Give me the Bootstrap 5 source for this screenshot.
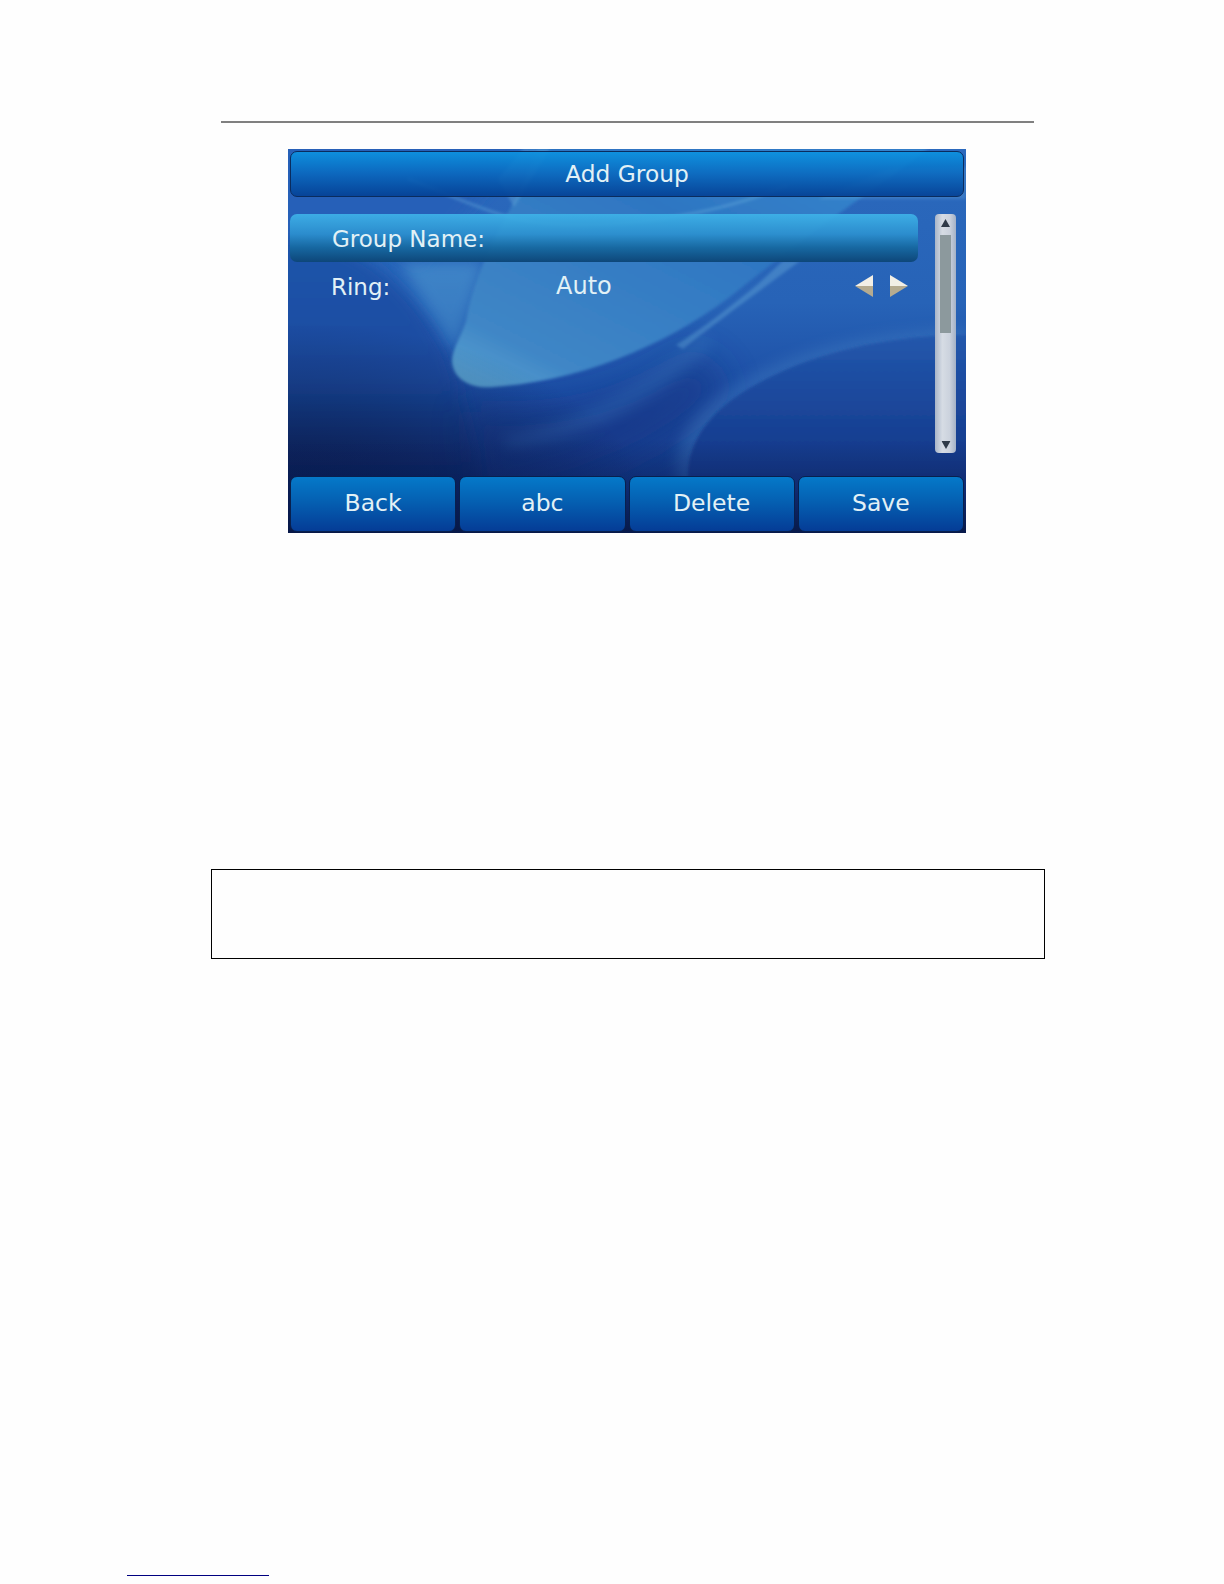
<!DOCTYPE html>
<html lang="en">
<head>
<meta charset="utf-8">
<title>Add Group</title>
<link href="https://cdn.jsdelivr.net/npm/bootstrap@5.3.0/dist/css/bootstrap.min.css" rel="stylesheet">
<style>
html,body{background:#fefefe;margin:0}
.doc-page{height:1584px;overflow:hidden}
.head-rule{height:2px;background:#808080;margin:121px 190px 0 221px}
.phone-screen{position:relative;width:678px;height:384px;margin:26px 0 0 288px;padding:2px;overflow:hidden;background:#1c4fa6;font-family:"DejaVu Sans",sans-serif;color:#e2f1f6}
.phone-bg{position:absolute;left:0;top:0;width:100%;height:100%}
.scr-layer{position:relative}
.title-bar{height:46px;font-size:23.300px;border:1px solid #0a2c5e;border-radius:7px;background:linear-gradient(180deg,rgba(12,146,224,.93),rgba(8,104,190,.86) 50%,rgba(5,66,150,.95))}
.title-bar span{position:relative;top:0}
.scr-mid{margin-top:17px}
.item-list{width:628px}
.item-row{height:48px;font-size:23px;padding-left:41px;border-radius:7px}
.item-sel{background:linear-gradient(180deg,rgba(62,178,232,.93),rgba(44,146,208,.88) 42%,rgba(22,104,160,.95) 70%,rgba(13,70,120,.98))}
.item-label{width:225px;flex:none}
.sel-text{position:relative;top:1px;left:1px}
.ring-label{position:relative;top:1px}
.ring-value{font-size:24px;position:relative}
.arrow-pair{margin-left:auto;margin-right:10px;gap:17px;display:flex}
.scroll-rail{width:21px;height:239px;margin-left:17px;border-radius:4px;background:linear-gradient(90deg,#a9b5c8,#d6dce4 35%,#cbd2dd 70%,#a4b1c6);position:relative}
.scroll-cap{height:17px}
.scroll-thumb{width:11px;height:98px;margin:4px auto 0;background:#8c999d}
.soft-row{margin:23px 0 0;gap:3px}
.soft-key{flex:1 1 0;height:56px;padding:0;font-family:"DejaVu Sans",sans-serif;font-size:23.500px;color:#e2f1f6;border:1px solid #08204e;border-radius:7px;background:linear-gradient(180deg,#0579c9,#0560b2 45%,#053c96)}
.soft-key:hover,.soft-key:active{color:#e2f1f6;background:linear-gradient(180deg,#0579c9,#0560b2 45%,#053c96);border-color:#08204e}
.note-box{height:90px;width:834px;margin:336px 0 0 211px;border:1px solid #000}
.foot-rule{height:1px;width:142px;background:#000080;margin:616px 0 0 127px}
</style>
</head>
<body>
<div class="doc-page">
  <div class="head-rule"></div>
  <div class="phone-screen">
    <svg class="phone-bg" viewBox="0 0 678 384" preserveAspectRatio="none" aria-hidden="true">
      <defs>
        <linearGradient id="baseG" x1="0" y1="0" x2="0" y2="1">
          <stop offset="0" stop-color="#2b69bd"/>
          <stop offset=".4" stop-color="#2763b7"/>
          <stop offset=".65" stop-color="#1c4ca3"/>
          <stop offset="1" stop-color="#0f2f78"/>
        </linearGradient>
        <linearGradient id="leftG" x1="0" y1="0" x2="0" y2="1">
          <stop offset="0" stop-color="#1f55ab"/>
          <stop offset=".5" stop-color="#1a4a9f"/>
          <stop offset=".8" stop-color="#0f2c74"/>
          <stop offset="1" stop-color="#091c52"/>
        </linearGradient>
        <linearGradient id="swathG" x1="0" y1="1" x2="1" y2="0">
          <stop offset="0" stop-color="#5da6d2"/>
          <stop offset=".16" stop-color="#3f86c6"/>
          <stop offset=".6" stop-color="#2e76c2"/>
          <stop offset="1" stop-color="#3689d0"/>
        </linearGradient>
        <linearGradient id="wedgeG" x1="0" y1="0" x2="0" y2="1">
          <stop offset="0" stop-color="#4f9ad2"/>
          <stop offset="1" stop-color="#3f86c6"/>
        </linearGradient>
        <linearGradient id="blobG" x1="0" y1="0" x2="0" y2="1">
          <stop offset="0" stop-color="#2257ac"/>
          <stop offset=".5" stop-color="#173f92"/>
          <stop offset="1" stop-color="#112f7a"/>
        </linearGradient>
        <linearGradient id="footG" x1="0" y1="0" x2="0" y2="1">
          <stop offset="0" stop-color="#0a1f5c" stop-opacity="0"/>
          <stop offset=".55" stop-color="#0a1f5c" stop-opacity=".55"/>
          <stop offset="1" stop-color="#071848" stop-opacity=".95"/>
        </linearGradient>
        <radialGradient id="cornerG" cx="0" cy="1" r=".55">
          <stop offset="0" stop-color="#061238" stop-opacity=".9"/>
          <stop offset="1" stop-color="#061238" stop-opacity="0"/>
        </radialGradient>
        <filter id="b1" x="-20%" y="-20%" width="140%" height="140%"><feGaussianBlur stdDeviation="1.800"/></filter>
        <filter id="b2" x="-30%" y="-30%" width="160%" height="160%"><feGaussianBlur stdDeviation="7"/></filter>
        <filter id="b3" x="-40%" y="-40%" width="180%" height="180%"><feGaussianBlur stdDeviation="18"/></filter>
      </defs>
      <rect width="678" height="384" fill="url(#baseG)"/>
      <path d="M-20 80C60 90 110 120 155 195C175 240 185 300 215 400H-20Z" fill="url(#leftG)" filter="url(#b2)"/>
      <path d="M-20 -10H240L130 120C100 90 50 80 -20 90Z" fill="#2561b8" filter="url(#b2)"/>
      <path d="M180 262C270 272 340 252 410 205L440 240C380 300 300 335 190 355Z" fill="#133684" opacity=".65" filter="url(#b3)"/>
      <path d="M112 113L195 113L168 204Z" fill="url(#wedgeG)" opacity=".6" filter="url(#b2)"/>
      <path d="M227 51C205 90 185 130 178 172C172 190 164 200 164 213C166 232 185 240 205 238C300 232 390 190 452 140C490 110 530 78 600 30L640 0H250Z" fill="url(#swathG)" filter="url(#b1)"/>
      <path d="M120 30C160 45 190 60 227 70C300 85 420 70 500 36" fill="none" stroke="#6fb6e2" stroke-opacity=".35" stroke-width="3" filter="url(#b1)"/>
      <path d="M495 112L470 135C440 160 410 182 388 196L395 200C420 180 460 150 512 112Z" fill="#7cc0e6" fill-opacity=".3" filter="url(#b1)"/>
      <path d="M210 30L235 0H262L226 58Z" fill="#7cc0e6" fill-opacity=".3" filter="url(#b1)"/>
      <path d="M530 50L600 20L678 18V50Z" fill="#7cc0e6" fill-opacity=".22" filter="url(#b1)"/>
      <path d="M212 288C290 275 360 230 415 185L425 195C370 250 300 290 222 300Z" fill="#4a8ccb" opacity=".22" filter="url(#b2)"/>
      <path d="M680 180C610 180 520 192 450 234C405 260 385 290 388 330L396 390H680Z" fill="#4d8cca" opacity=".32" filter="url(#b2)"/>
      <path d="M680 186C615 186 530 198 460 240C420 264 398 295 400 330L408 390H680Z" fill="url(#blobG)" filter="url(#b1)"/>
      <rect width="678" height="384" fill="url(#cornerG)"/>
      <rect y="290" width="678" height="94" fill="url(#footG)"/>
    </svg>

    <div class="scr-layer">
      <div class="title-bar d-flex align-items-center justify-content-center"><span>Add Group</span></div>
      <div class="scr-mid d-flex align-items-start">
        <div class="item-list">
          <div class="item-row item-sel d-flex align-items-center"><span class="sel-text">Group Name:</span></div>
          <div class="item-row d-flex align-items-center">
            <span class="item-label ring-label">Ring:</span>
            <span class="ring-value">Auto</span>
            <div class="arrow-pair">
              <svg width="18" height="22" viewBox="0 0 18 22" aria-hidden="true"><path d="M0 11L18 0V11Z" fill="#f2efe6"/><path d="M0 11L18 22V11Z" fill="#b5ab90"/></svg>
              <svg width="18" height="22" viewBox="0 0 18 22" aria-hidden="true"><path d="M18 11L0 0V11Z" fill="#f2efe6"/><path d="M18 11L0 22V11Z" fill="#b5ab90"/></svg>
            </div>
          </div>
        </div>
        <div class="scroll-rail">
          <div class="scroll-cap d-flex justify-content-center align-items-center"><svg width="9" height="8" viewBox="0 0 9 8" aria-hidden="true"><path d="M4.500 0L9 8H0Z" fill="#2f3a48"/></svg></div>
          <div class="scroll-thumb"></div>
          <svg class="position-absolute bottom-0 start-50 translate-middle-x mb-1" width="9" height="8" viewBox="0 0 9 8" aria-hidden="true"><path d="M0 0H9L4.500 8Z" fill="#2f3a48"/></svg>
        </div>
      </div>
      <div class="soft-row d-flex">
        <button type="button" class="btn soft-key">Back</button>
        <button type="button" class="btn soft-key">abc</button>
        <button type="button" class="btn soft-key">Delete</button>
        <button type="button" class="btn soft-key">Save</button>
      </div>
    </div>
  </div>
  <div class="note-box"></div>
  <div class="foot-rule"></div>
</div>
<script src="https://cdn.jsdelivr.net/npm/bootstrap@5.3.0/dist/js/bootstrap.bundle.min.js"></script>
</body>
</html>
